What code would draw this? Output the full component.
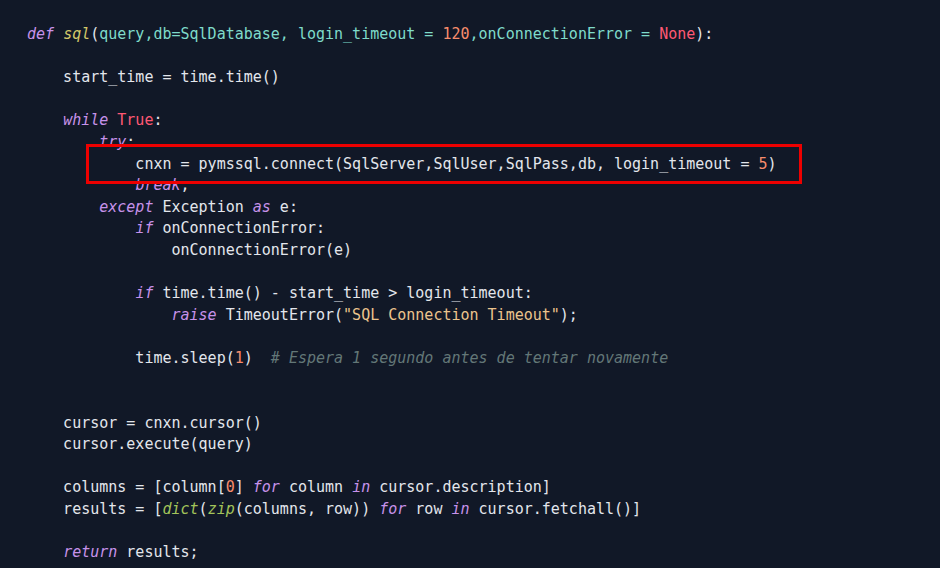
type Tok = [string, string?];

const K = 'text-[#c792ea] italic';
const FN = 'text-[#d4c96a] italic';
const P = 'text-[#7fdbca]';
const B = 'text-[#ff5874]';
const N = 'text-[#f78c6c]';
const S = 'text-[#ecc48d]';
const C = 'text-[#637777] italic';
const G = 'text-[#a3c45a] italic';

const lines: Tok[][] = [
  [['def', K], [' '], ['sql', FN], ['('], ['query,db=SqlDatabase, login_timeout = ', P], ['120', N], [',onConnectionError = ', P], ['None', B], ['):']],
  [],
  [['    start_time = time.time()']],
  [],
  [['    '], ['while', K], [' '], ['True', B], [':']],
  [['        '], ['try', K], [':']],
  [['            cnxn = pymssql.connect(SqlServer,SqlUser,SqlPass,db, login_timeout = '], ['5', N], [')']],
  [['            '], ['break', K], [';']],
  [['        '], ['except', K], [' Exception '], ['as', K], [' e:']],
  [['            '], ['if', K], [' onConnectionError:']],
  [['                onConnectionError(e)']],
  [],
  [['            '], ['if', K], [' time.time() - start_time > login_timeout:']],
  [['                '], ['raise', K], [' TimeoutError('], ['"SQL Connection Timeout"', S], [');']],
  [],
  [['            time.sleep('], ['1', N], [')  '], ['# Espera 1 segundo antes de tentar novamente', C]],
  [],
  [],
  [['    cursor = cnxn.cursor()']],
  [['    cursor.execute(query)']],
  [],
  [['    columns = [column['], ['0', N], ['] '], ['for', K], [' column '], ['in', K], [' cursor.description]']],
  [['    results = ['], ['dict', G], ['('], ['zip', G], ['(columns, row)) '], ['for', K], [' row '], ['in', K], [' cursor.fetchall()]']],
  [],
  [['    '], ['return', K], [' results;']],
];

export default function App() {
  return (
    <div className="w-[940px] h-[568px] overflow-hidden bg-[#111827]">
      <div className="relative pt-[24px] pl-[27px]">
        <pre className="font-['DejaVu_Sans_Mono','Liberation_Mono',monospace] text-[15px] leading-[21.6px] text-[#e3e6ec] whitespace-pre">
          {lines.map((line, i) => (
            <div key={i} className="h-[21.6px]">
              {line.map(([text, cls], j) => (
                <span key={j} className={cls}>
                  {text}
                </span>
              ))}
            </div>
          ))}
        </pre>
        <div className="absolute left-[86px] top-[144px] w-[716px] h-[40px] border-[3px] border-[#ee0000]" />
      </div>
    </div>
  );
}
